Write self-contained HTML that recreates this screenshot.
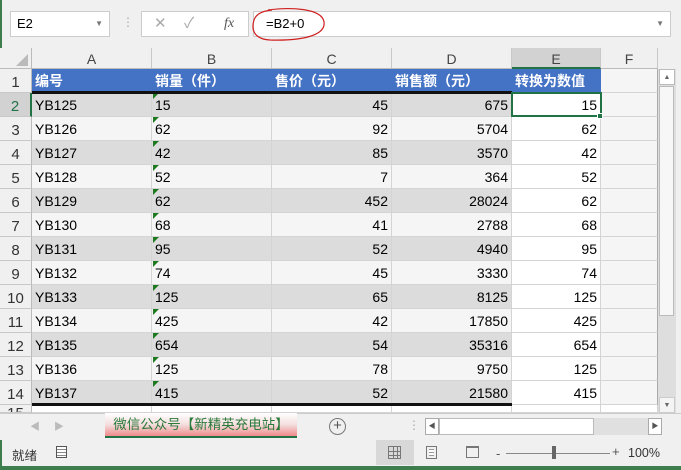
<!DOCTYPE html><html><head><meta charset="utf-8"><style>
*{margin:0;padding:0;box-sizing:border-box}
body{width:681px;height:470px;overflow:hidden;background:#f0f0f0;font-family:"Liberation Sans","Noto Sans CJK SC",sans-serif;font-size:14px;position:relative;color:#000}
.a{position:absolute}
.c{position:absolute;height:24px;line-height:25px;padding:0 3px;white-space:nowrap;overflow:hidden;border-right:1px solid #d4d4d4;border-bottom:1px solid #d4d4d4}
.r{text-align:right}
.h{position:absolute;top:48px;height:21px;line-height:22px;text-align:center;color:#444;font-size:14px;border-right:1px solid #c8c8c8;background:#f0f0f0;border-bottom:1px solid #bbb}
.rn{position:absolute;left:0;width:32px;height:24px;line-height:28px;text-align:center;font-size:15px;color:#333;border-bottom:1px solid #c8c8c8;border-right:1px solid #bbb;background:#f0f0f0}
.tri{position:absolute;width:0;height:0;border-top:6px solid #1e7a1e;border-right:6px solid transparent}
</style></head><body>
<div class="a" style="left:0;top:0;width:2px;height:470px;background:#3e7d4e"></div>
<div class="a" style="left:0;top:466px;width:681px;height:4px;background:#3e7d4e"></div>
<!-- formula bar -->
<div class="a" style="left:10px;top:11px;width:100px;height:26px;background:#fff;border:1px solid #ccc;line-height:24px;padding-left:6px;font-size:13px">E2<span style="position:absolute;right:6px;top:0;font-size:8px;color:#777">▼</span></div>
<div class="a" style="left:122px;top:15px;color:#aaa;font-size:12px">⋮</div>
<div class="a" style="left:141px;top:11px;width:108px;height:26px;background:#fff;border:1px solid #ccc;color:#aaa;font-size:15px;line-height:24px"><span style="position:absolute;left:12px">✕</span><span style="position:absolute;left:42px">✓</span><span style="position:absolute;left:82px;color:#555;font-family:'Liberation Serif',serif;font-style:italic;font-size:14px">fx</span></div>
<div class="a" style="left:253px;top:11px;width:418px;height:26px;background:#fff;border:1px solid #ccc;line-height:24px;padding-left:12px;font-size:13px">=B2+0<span style="position:absolute;right:6px;top:0;font-size:8px;color:#777">▼</span></div>
<svg class="a" style="left:250px;top:6px" width="80" height="38"><path d="M18 4 C40 1 72 2 74 16 C76 30 50 35 20 34 C4 33 1 24 4 14 C6 8 12 5 22 4" fill="none" stroke="#d02020" stroke-width="1.2"/></svg>
<!-- grid bg -->
<div class="a" style="left:32px;top:69px;width:626px;height:344px;background:#fff"></div>
<div class="a" style="left:0;top:48px;width:32px;height:21px;background:#f0f0f0;border-right:1px solid #bbb;border-bottom:1px solid #bbb"></div>
<div class="a" style="left:16px;top:54px;width:0;height:0;border-left:12px solid transparent;border-bottom:12px solid #bbb"></div>
<div class="h" style="left:32px;width:120px">A</div>
<div class="h" style="left:152px;width:120px">B</div>
<div class="h" style="left:272px;width:120px">C</div>
<div class="h" style="left:392px;width:120px">D</div>
<div class="h" style="left:512px;width:89px;background:#d2d2d2;border-bottom:2px solid #217346">E</div>
<div class="h" style="left:601px;width:57px">F</div>
<div id="g"></div>
<script>
var d=[["YB125",15,45,675],["YB126",62,92,5704],["YB127",42,85,3570],["YB128",52,7,364],["YB129",62,452,28024],["YB130",68,41,2788],["YB131",95,52,4940],["YB132",74,45,3330],["YB133",125,65,8125],["YB134",425,42,17850],["YB135",654,54,35316],["YB136",125,78,9750],["YB137",415,52,21580]];
var h='';
for(var n=1;n<=15;n++){var t=69+24*(n-1);h+='<div class="rn" style="top:'+t+'px;'+(n==2?'background:#d2d2d2;color:#217346;border-right:2px solid #217346;':'')+(n==15?'height:8px;line-height:18px;overflow:hidden;':'')+'">'+n+'</div>';}
var hd=['编号','销量（件）','售价（元）','销售额（元）','转换为数值'];var xs=[32,152,272,392,512],ws=[120,120,120,120,89];
for(var i=0;i<5;i++)h+='<div class="c" style="left:'+xs[i]+'px;top:69px;width:'+ws[i]+'px;background:#4472c4;color:#fff;font-weight:bold;border-color:#4472c4">'+hd[i]+'</div>';
h+='<div class="c" style="left:601px;top:69px;width:57px;background:#f5f5f5;border-right-color:#aaa"></div>';
for(var r=0;r<13;r++){var t=93+24*r,bg=r%2==0?'#dcdcdc':'#f5f5f5';var v=[d[r][0],d[r][1],d[r][2],d[r][3],d[r][1]];
for(var i=0;i<5;i++){h+='<div class="c'+(i>=2||i==4?' r':'')+'" style="left:'+xs[i]+'px;top:'+t+'px;width:'+ws[i]+'px;background:'+(i==4?'#fff':bg)+'">'+v[i]+'</div>';}
h+='<div class="tri" style="left:153px;top:'+t+'px"></div>';
h+='<div class="c" style="left:601px;top:'+t+'px;width:57px;background:#f5f5f5;border-right-color:#aaa"></div>';}
for(var i=0;i<6;i++)h+='<div class="c" style="left:'+(i<5?xs[i]:601)+'px;top:405px;width:'+(i<5?ws[i]:57)+'px;height:8px;background:#fff"></div>';
document.getElementById('g').innerHTML=h;
</script>
<div class="a" style="left:32px;top:91px;width:480px;height:3px;background:#111"></div>
<div class="a" style="left:32px;top:403px;width:480px;height:3px;background:#111"></div>
<div class="a" style="left:511px;top:92px;width:91px;height:25px;border:2px solid #217346"></div>
<div class="a" style="left:597px;top:113px;width:6px;height:6px;background:#217346;border:1px solid #fff"></div>
<!-- v scrollbar -->
<div class="a" style="left:658px;top:69px;width:18px;height:344px;background:#dedede;border-left:1px solid #ddd"></div>
<div class="a" style="left:659px;top:69px;width:16px;height:16px;font-size:7px;color:#666;text-align:center;line-height:16px;border:1px solid #bbb;background:#fff">▲</div>
<div class="a" style="left:659px;top:86px;width:15px;height:230px;background:#f7f7f7;border:1px solid #bbb"></div>
<div class="a" style="left:659px;top:397px;width:16px;height:16px;font-size:7px;color:#666;text-align:center;line-height:16px;border:1px solid #ccc;background:#f4f4f4">▼</div>
<!-- tab bar -->
<div class="a" style="left:0;top:413px;width:681px;height:27px;background:#f0f0f0;border-top:1px solid #ccc"></div>
<div class="a" style="left:30px;top:418px;color:#bbb;font-size:10px">◀&nbsp;&nbsp;&nbsp;&nbsp;&nbsp;▶</div>
<div class="a" style="left:105px;top:413px;width:192px;height:25px;background:linear-gradient(#fff 0%,#f4dede 50%,#f08a8a 100%);border-bottom:2px solid #217346;text-align:center;line-height:24px;color:#2a7a3a;font-size:13.5px">微信公众号【新精英充电站】</div>
<div class="a" style="left:329px;top:418px;width:17px;height:17px;border:1px solid #777;border-radius:50%;text-align:center;line-height:14px;color:#555;font-size:15px">+</div>
<div class="a" style="left:408px;top:418px;color:#aaa;font-size:12px">⋮</div>
<div class="a" style="left:425px;top:418px;width:14px;height:17px;border:1px solid #aaa;background:#fff;font-size:7px;line-height:15px;text-align:center;color:#555">◀</div>
<div class="a" style="left:439px;top:418px;width:155px;height:17px;border:1px solid #bbb;background:#fff"></div>
<div class="a" style="left:594px;top:418px;width:54px;height:17px;background:#e0e0e0"></div>
<div class="a" style="left:648px;top:418px;width:14px;height:17px;border:1px solid #aaa;background:#fff;font-size:7px;line-height:15px;text-align:center;color:#555">▶</div>
<!-- status -->
<div class="a" style="left:12px;top:445px;font-size:12.5px;color:#333">就绪</div>
<div class="a" style="left:56px;top:446px;width:11px;height:12px;border:1px solid #555;background:repeating-linear-gradient(#fff 0 2px,#888 2px 3px)"></div>
<div class="a" style="left:376px;top:440px;width:38px;height:25px;background:#d8d8d8"></div>
<div class="a" style="left:388px;top:446px;width:13px;height:13px;border:1px solid #777;background:linear-gradient(90deg,transparent 4px,#777 4px 5px,transparent 5px 8px,#777 8px 9px,transparent 9px),linear-gradient(transparent 4px,#777 4px 5px,transparent 5px 8px,#777 8px 9px,transparent 9px)"></div>
<div class="a" style="left:426px;top:446px;width:11px;height:13px;border:1px solid #777;background:repeating-linear-gradient(#fff 0 2px,#999 2px 3px);background-clip:content-box;padding:2px"></div>
<div class="a" style="left:466px;top:446px;width:13px;height:12px;border:1px solid #777;border-top-width:2px"></div>
<div class="a" style="left:496px;top:446px;font-size:13px;color:#555">-</div>
<div class="a" style="left:506px;top:453px;width:104px;height:1px;background:#888"></div>
<div class="a" style="left:552px;top:446px;width:4px;height:13px;background:#666"></div>
<div class="a" style="left:612px;top:444px;font-size:13px;color:#555">+</div>
<div class="a" style="left:628px;top:446px;font-size:12.5px;color:#333">100%</div>
</body></html>
